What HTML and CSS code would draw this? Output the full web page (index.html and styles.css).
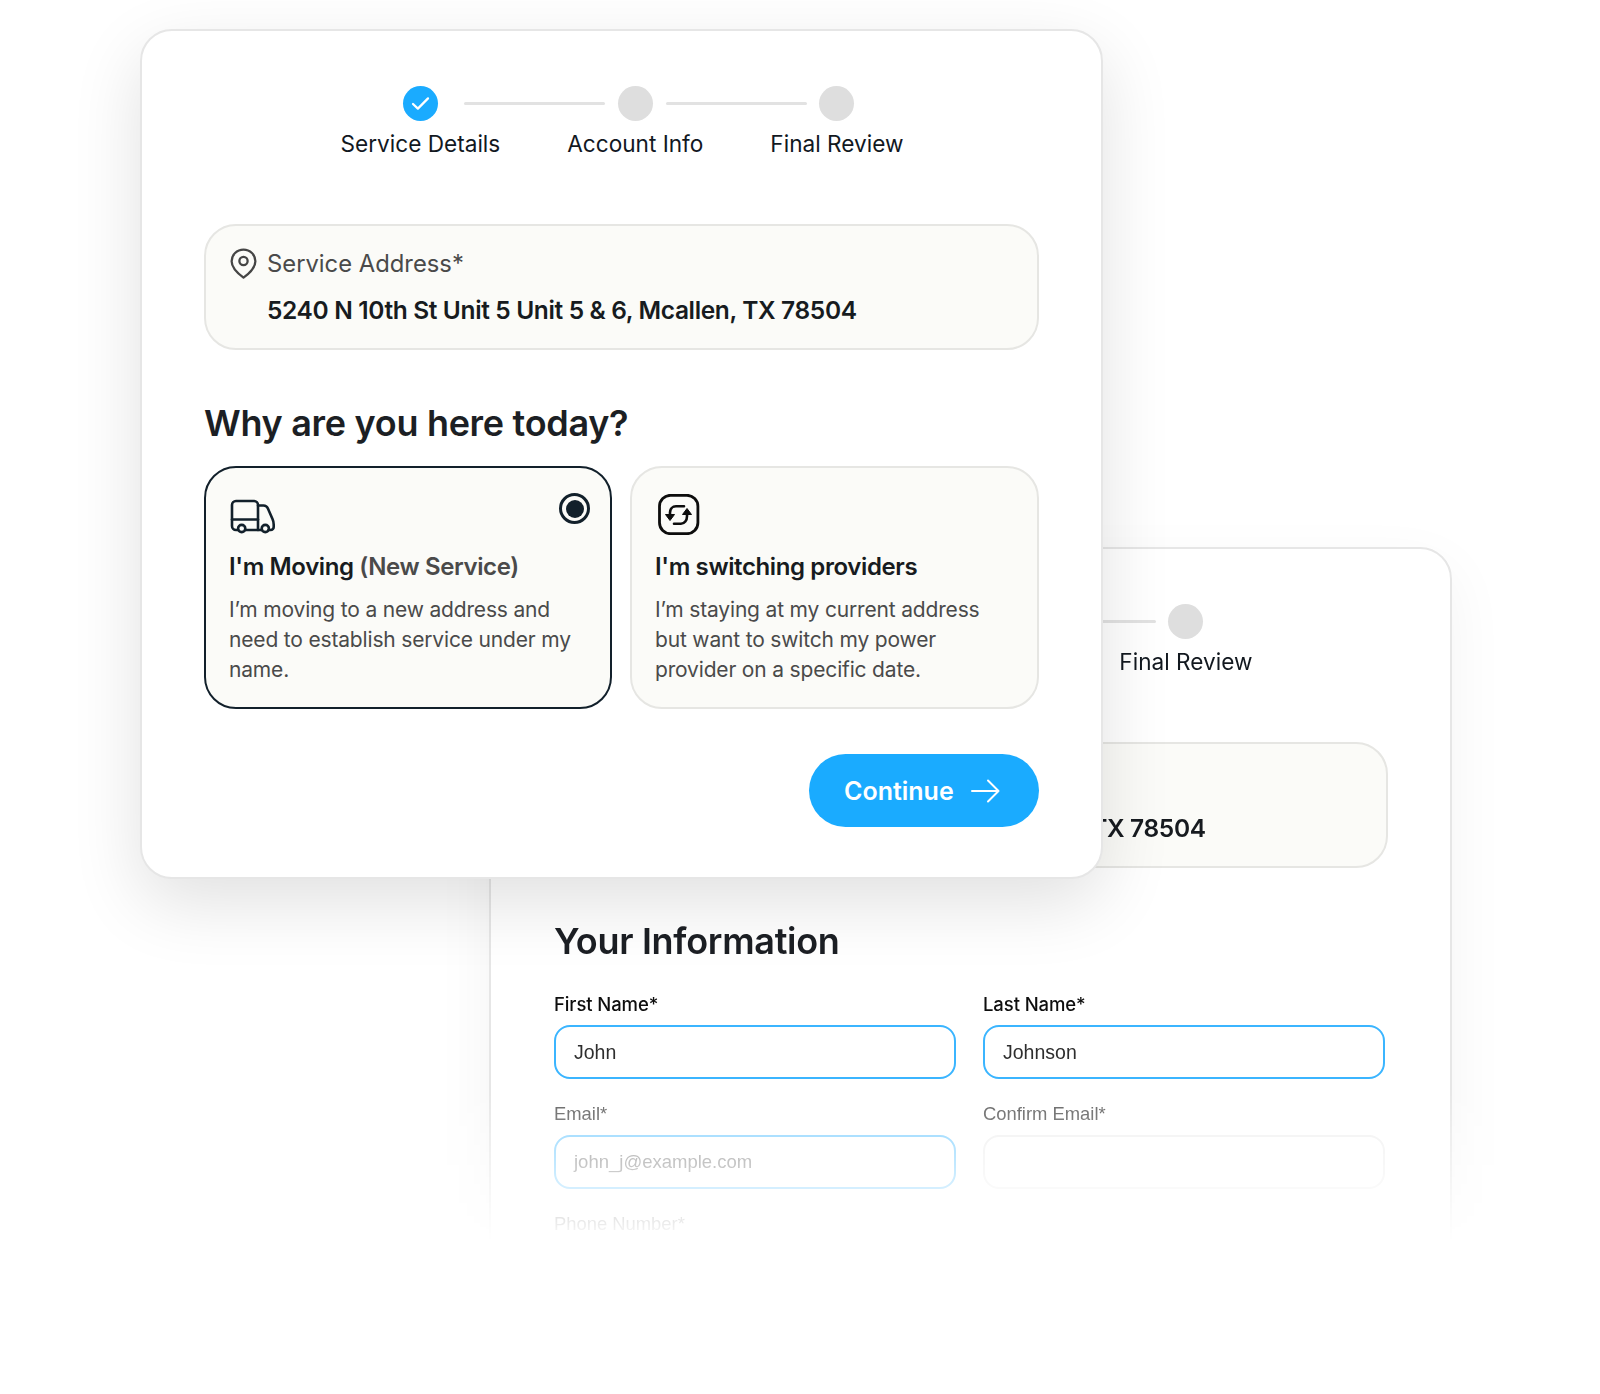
FILE: index.html
```html
<!DOCTYPE html>
<html lang="en">
<head>
<meta charset="utf-8">
<title>Service signup</title>
<link rel="stylesheet" href="styles.css">
</head>
<body>
<main class="stage">
  <div class="fade">
    <section class="panel panel-back">
      <div class="stepper">
        <div class="step"><span class="dot dot-done"></span><span class="step-label step-label-covered">Service Details</span></div>
        <div class="step step-linked"><span class="dot"></span><span class="step-label step-label-covered">Account Info</span></div>
        <div class="step step-linked"><span class="dot"></span><span class="step-label">Final Review</span></div>
      </div>
      <div class="address">
        <div class="address-label step-label-covered">Service Address*</div>
        <div class="address-value">5240 N 10th St Unit 5 Unit 5 &amp; 6, Mcallen, TX 78504</div>
      </div>
      <h2 class="heading heading-back">Your Information</h2>
      <div class="form-grid">
        <div class="field">
          <div class="field-label field-label-strong">First Name*</div>
          <div class="input input-active">John</div>
        </div>
        <div class="field">
          <div class="field-label field-label-strong">Last Name*</div>
          <div class="input input-active">Johnson</div>
        </div>
        <div class="field">
          <div class="field-label">Email*</div>
          <div class="input input-hint">john_j@example.com</div>
        </div>
        <div class="field">
          <div class="field-label">Confirm Email*</div>
          <div class="input input-empty"></div>
        </div>
        <div class="field">
          <div class="field-label">Phone Number*</div>
          <div class="input input-empty"></div>
        </div>
      </div>
    </section>
  </div>

  <section class="panel panel-front">
    <div class="stepper">
      <div class="step">
        <span class="dot dot-done">
          <svg class="check" viewBox="0 0 20 16" width="19" height="15" aria-hidden="true"><path d="M2 8.500l5.200 5L18 2.500" fill="none" stroke="#fff" stroke-width="2.400" stroke-linecap="round" stroke-linejoin="round"/></svg>
        </span>
        <span class="step-label">Service Details</span>
      </div>
      <div class="step step-linked"><span class="dot"></span><span class="step-label">Account Info</span></div>
      <div class="step step-linked"><span class="dot"></span><span class="step-label">Final Review</span></div>
    </div>

    <div class="address">
      <div class="address-label">
        <svg class="pin" viewBox="0 0 26 30" width="27" height="31" aria-hidden="true"><path d="M13 1.500C6.600 1.500 1.500 6.600 1.500 12.800c0 6.200 4.900 11 11.500 15.900 6.600-4.900 11.500-9.700 11.500-15.900C24.500 6.600 19.400 1.500 13 1.500z" fill="none" stroke="#454545" stroke-width="2.200" stroke-linejoin="round"/><circle cx="13" cy="12.500" r="4" fill="none" stroke="#454545" stroke-width="2.200"/></svg>
        Service Address*
      </div>
      <div class="address-value">5240 N 10th St Unit 5 Unit 5 &amp; 6, Mcallen, TX 78504</div>
    </div>

    <h2 class="heading">Why are you here today?</h2>

    <div class="choices">
      <article class="choice choice-selected">
        <svg class="choice-icon" viewBox="0 0 46 41" width="46" height="41" aria-hidden="true">
          <g fill="none" stroke="#12202b" stroke-width="2.600" stroke-linecap="round" stroke-linejoin="round">
            <path d="M9 36H7a4 4 0 0 1-4-4V11a4 4 0 0 1 4-4h18a4 4 0 0 1 4 4v25H16.500"/>
            <path d="M3 25.500h26"/>
            <path d="M29 11.500h5.500c2 0 3.500 1 4.300 2.800l4.700 10.700c.8 1.800 1.200 3.600 1.200 5.500v2.500a3 3 0 0 1-3 3h-2"/>
            <path d="M29 36h3.500"/>
            <circle cx="12.700" cy="34.500" r="3.600"/>
            <circle cx="36.300" cy="34.500" r="3.600"/>
          </g>
        </svg>
        <span class="radio"><span class="radio-dot"></span></span>
        <h3 class="choice-title">I'm Moving <span class="choice-muted">(New Service)</span></h3>
        <p class="choice-text">I’m moving to a new address and need to establish service under my name.</p>
      </article>
      <article class="choice">
        <svg class="choice-icon" viewBox="0 0 46 41" width="46" height="41" aria-hidden="true">
          <rect x="4.500" y="1.300" width="38.400" height="38.400" rx="11" fill="none" stroke="#0d0d0d" stroke-width="2.800"/>
          <path d="M15 21v-2.500c0-3.500 2.500-6.200 6-6.200h8" fill="none" stroke="#0d0d0d" stroke-width="2.600" stroke-linecap="round"/>
          <path d="M32 19.500v2.700c0 4-2.500 7.500-6 7.500h-7" fill="none" stroke="#0d0d0d" stroke-width="2.600" stroke-linecap="round"/>
          <path d="M10.500 20.500h9L15 26.500z" fill="#0d0d0d" stroke="#0d0d0d" stroke-width="1" stroke-linejoin="round"/>
          <path d="M27.500 20.500h9L32 14.500z" fill="#0d0d0d" stroke="#0d0d0d" stroke-width="1" stroke-linejoin="round"/>
        </svg>
        <h3 class="choice-title">I'm switching providers</h3>
        <p class="choice-text">I’m staying at my current address but want to switch my power provider on a specific date.</p>
      </article>
    </div>

    <div class="actions">
      <button class="continue" type="button">
        Continue
        <svg viewBox="0 0 29 24" width="29" height="24" aria-hidden="true"><path d="M1 12h26.500M17 1.500 27.500 12 17 22.500" fill="none" stroke="#fff" stroke-width="2" stroke-linecap="round" stroke-linejoin="round"/></svg>
      </button>
    </div>
  </section>
</main>
</body>
</html>
```

FILE: styles.css
```css
* { box-sizing: border-box; }

html, body {
  margin: 0;
  padding: 0;
  background: #fff;
}

.stage {
  position: relative;
  width: 1600px;
  height: 1394px;
  overflow: hidden;
  font-family: Inter, "Liberation Sans", sans-serif;
  color: #12181f;
}

.fade {
  position: absolute;
  left: 389px;
  top: 447px;
  width: 1163px;
  height: 800px;
  padding: 100px;
  -webkit-mask-image: linear-gradient(to bottom, #000 0, #000 640px, transparent 795px);
  mask-image: linear-gradient(to bottom, #000 0, #000 640px, transparent 795px);
}

.panel {
  width: 963px;
  padding: 55px 62px 50px;
  background: #fff;
  border: 2px solid #e6e6e6;
  border-radius: 32px;
}

.panel-back {
  height: 900px;
  box-shadow: 0 20px 60px rgba(0, 0, 0, .05);
}

.panel-front {
  position: absolute;
  left: 140px;
  top: 29px;
  height: 850px;
  box-shadow: 0 24px 70px rgba(0, 0, 0, .12);
}

/* stepper */
.stepper {
  display: flex;
  justify-content: center;
  gap: 67px;
  padding-left: 1px;
}

.step {
  position: relative;
  display: flex;
  flex-direction: column;
  align-items: center;
  gap: 10px;
}

.step-linked::before {
  content: "";
  position: absolute;
  top: 16px;
  right: calc(50% + 30px);
  width: 141px;
  height: 3px;
  background: #e2e2e2;
  border-radius: 2px;
}

.dot {
  display: flex;
  align-items: center;
  justify-content: center;
  width: 35px;
  height: 35px;
  border-radius: 50%;
  background: #dedede;
}

.dot-done { background: #1aabff; }

.step-label {
  font-size: 22.600px;
  line-height: 25px;
  white-space: nowrap;
}

.step-label-covered { visibility: hidden; }

/* address */
.address {
  margin-top: 68px;
  height: 126px;
  padding: 22px 24px 0 61px;
  background: #fbfbf8;
  border: 2px solid #e6e6e3;
  border-radius: 32px;
}

.address-label {
  position: relative;
  font-size: 23.800px;
  line-height: 32px;
  color: #4a4a4a;
}

.pin {
  position: absolute;
  left: -37px;
  top: 0;
}

.address-value {
  margin-top: 14px;
  font-size: 24.500px;
  line-height: 32px;
  letter-spacing: -.36px;
  font-weight: 600;
  color: #171b20;
  white-space: nowrap;
}

.heading {
  margin: 51px 0 0;
  font-size: 36px;
  line-height: 44px;
  letter-spacing: -.3px;
  font-weight: 600;
  color: #1c1f24;
}

.heading-back { margin-left: 1px; }

/* choices */
.choices {
  display: grid;
  grid-template-columns: 408px 409px;
  gap: 18px;
  margin-top: 21px;
}

.choice {
  position: relative;
  height: 243px;
  padding: 26px 20px 0 23px;
  background: #fbfbf8;
  border: 2px solid #e6e6e3;
  border-radius: 32px;
}

.choice-selected { border-color: #12202b; }

.choice-icon { display: block; }

.radio {
  position: absolute;
  top: 25px;
  right: 20px;
  display: flex;
  align-items: center;
  justify-content: center;
  width: 31px;
  height: 31px;
  border: 3px solid #12202b;
  border-radius: 50%;
}

.radio-dot {
  width: 18px;
  height: 18px;
  border-radius: 50%;
  background: #12202b;
}

.choice-title {
  margin: 16px 0 0;
  font-size: 24px;
  line-height: 32px;
  letter-spacing: -.38px;
  font-weight: 600;
  color: #171b20;
}

.choice-muted { color: #4a4a4a; }

.choice-text {
  max-width: 350px;
  margin: 11.500px 0 0;
  font-size: 21px;
  line-height: 30.200px;
  letter-spacing: -.17px;
  color: #4a4a4a;
}

.actions {
  display: flex;
  justify-content: flex-end;
  margin-top: 45px;
}

.continue {
  display: flex;
  align-items: center;
  gap: 17px;
  width: 230px;
  height: 73px;
  padding: 0 0 0 35px;
  font-family: inherit;
  font-size: 25px;
  font-weight: 600;
  color: #fff;
  background: #1aabff;
  border: 0;
  border-radius: 37px;
}

/* form */
.form-grid {
  display: grid;
  grid-template-columns: 402px 402px;
  column-gap: 27px;
  row-gap: 23px;
  margin: 29px 0 0 1px;
}

.field-label {
  font-family: "Liberation Sans", Arial, sans-serif;
  font-size: 18.400px;
  line-height: 24px;
  color: #5c5c5c;
}

.field-label-strong {
  font-family: Inter, sans-serif;
  font-size: 18.500px;
  letter-spacing: -.1px;
  font-weight: 500;
  color: #0e0e0e;
}

.input {
  height: 54px;
  margin-top: 9px;
  padding: 0 18px;
  font-family: "Liberation Sans", Arial, sans-serif;
  font-size: 19.500px;
  line-height: 50px;
  background: #fff;
  border: 2px solid #e9e9e9;
  border-radius: 16px;
}

.input-active {
  color: #2e2e2e;
  border-color: #3bb5ff;
}

.input-hint {
  font-size: 18.500px;
  color: #8e8e8e;
  border-color: #86d2ff;
}

.input-empty { border-color: #f0f0f0; }
```
